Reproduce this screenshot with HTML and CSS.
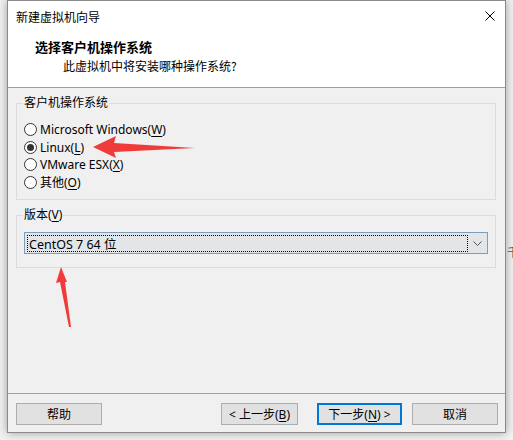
FILE: index.html
```html
<!DOCTYPE html>
<html>
<head>
    <title>新建虚拟机向导</title>
    <link rel="stylesheet" href="styles.css">
</head>
<body>
    <div class="wizard">
        <div class="wizard-top">
            <div class="title-bar">
                <span class="title">新建虚拟机向导</span>
                <svg class="close" width="10" height="10" viewBox="0 0 10 10">
                    <path d="M0.5 0.5 L9.5 9.5 M9.5 0.5 L0.5 9.5" stroke="#000" stroke-width="1" fill="none"/>
                </svg>
            </div>
            <div class="page-head">
                <h3>选择客户机操作系统</h3>
                <p>此虚拟机中将安装哪种操作系统?</p>
            </div>
        </div>

        <div class="wizard-body">
            <fieldset class="group os-group">
                <legend>客户机操作系统</legend>
                <label class="radio"><span class="dot"></span><span>Microsoft Windows(<u>W</u>)</span></label>
                <label class="radio checked"><span class="dot"></span><span>Linux(<u>L</u>)</span></label>
                <label class="radio"><span class="dot"></span><span>VMware ESX(<u>X</u>)</span></label>
                <label class="radio"><span class="dot"></span><span>其他(<u>O</u>)</span></label>
            </fieldset>

            <fieldset class="group version-group">
                <legend>版本(<u>V</u>)</legend>
                <div class="combo">
                    <div class="combo-value"><span>CentOS 7 64 位</span></div>
                    <div class="combo-arrow">
                        <svg width="9" height="5" viewBox="0 0 9 5">
                            <path d="M0.5 0.5 L4.5 4.5 L8.5 0.5" stroke="#555" stroke-width="1" fill="none"/>
                        </svg>
                    </div>
                </div>
            </fieldset>
        </div>

        <div class="wizard-footer">
            <button class="btn btn-help">帮助</button>
            <span class="spacer"></span>
            <button class="btn btn-back">&lt; 上一步(<u>B</u>)</button>
            <button class="btn btn-next">下一步(<u>N</u>) &gt;</button>
            <button class="btn btn-cancel">取消</button>
        </div>
    </div>

    <div class="behind">千</div>

    <!-- 红色标注箭头 -->
    <svg class="marks" width="513" height="440" viewBox="0 0 513 440">
        <polygon points="93,147 116,136 114,143 195,148 114,152 116,158" fill="#f03b3b"/>
        <polygon points="61,267 67,282 65,282 71,327 69,327 60,282 56,283" fill="#f03b3b"/>
    </svg>
</body>
</html>
```

FILE: styles.css
```css
body {
    margin: 0;
    padding: 0;
    width: 513px;
    height: 440px;
    overflow: hidden;
    background: #f2f2f2;
    font-family: 'Noto Sans', 'Noto Sans CJK SC', sans-serif;
    font-size: 12px;
    color: #000;
    display: flex;
    align-items: flex-start;
}

u {
    text-decoration: underline;
    text-underline-offset: 2px;
}

.wizard {
    flex-shrink: 0;
    margin-left: 7px;
    width: 497px;
    height: 431px;
    border: 1px solid #8a8a8a;
    background: #f0f0f0;
    box-shadow: 0 0 9px rgba(0, 0, 0, 0.35);
    display: flex;
    flex-direction: column;
}

.wizard-top {
    background: #fff;
    height: 86px;
    border-bottom: 1px solid #a0a0a0;
}

.title-bar {
    height: 30px;
    display: flex;
    align-items: center;
    justify-content: space-between;
    padding: 0 10px 0 8px;
}

.title {
    font-family: 'Noto Sans CJK SC', sans-serif;
}

.page-head {
    padding: 7px 0 0 27px;
}

.page-head h3 {
    margin: 0;
    font-size: 13px;
    line-height: 18px;
    font-weight: bold;
    font-family: 'Noto Sans CJK SC', sans-serif;
}

.page-head p {
    margin: 1px 0 0 28px;
    line-height: 18px;
    font-family: 'Noto Sans CJK SC', sans-serif;
}

.wizard-body {
    flex: 1;
    padding: 0 9px 0 8px;
}

.group {
    margin: 7px 0 0 0;
    border: 1px solid #dcdcdc;
    padding: 0 7px;
    min-width: 0;
}

.group legend {
    padding: 0 1px;
    margin-left: -1px;
    line-height: 16px;
}

.os-group {
    padding-top: 10px;
    padding-bottom: 8px;
}

.radio {
    display: flex;
    align-items: center;
    height: 17.5px;
    gap: 3px;
}

.dot {
    width: 11px;
    height: 11px;
    border: 1px solid #333;
    border-radius: 50%;
    background: #fff;
    display: flex;
    align-items: center;
    justify-content: center;
}

.checked .dot::after {
    content: '';
    width: 7px;
    height: 7px;
    border-radius: 50%;
    background: #333;
}

.version-group {
    padding-top: 9px;
    padding-bottom: 13px;
}

.combo {
    height: 20px;
    border: 1px solid #7f9db9;
    background: #e3e6e9;
    display: flex;
}

.combo-value {
    flex: 1;
    margin: 2px 0 1px 2px;
    border: 1px dotted #000;
    display: flex;
    align-items: center;
    padding-left: 1px;
}

.combo-value span {
    font-size: 12.5px;
}

.combo-arrow {
    width: 19px;
    display: flex;
    align-items: center;
    justify-content: center;
}

.wizard-footer {
    height: 39px;
    border-top: 1px solid #a0a0a0;
    display: flex;
    align-items: flex-start;
    padding: 9px 7px 0 8px;
    box-sizing: border-box;
}

.spacer {
    flex: 1;
}

.btn {
    height: 22px;
    padding: 0;
    background: #e1e1e1;
    border: 1px solid #adadad;
    font-family: 'Noto Sans', 'Noto Sans CJK SC', sans-serif;
    font-size: 12px;
    color: #000;
}

.btn-help {
    width: 86px;
}

.btn-back {
    width: 77px;
}

.btn-next {
    width: 85px;
    margin-left: 19px;
    border: 2px solid #0078d7;
}

.btn-cancel {
    width: 86px;
    margin-left: 10px;
}

.behind {
    padding-top: 243px;
    padding-left: 1px;
    font-family: 'Noto Sans CJK SC', sans-serif;
    color: #555;
    white-space: nowrap;
}

.marks {
    position: absolute;
    top: 0;
    left: 0;
    pointer-events: none;
}
```
